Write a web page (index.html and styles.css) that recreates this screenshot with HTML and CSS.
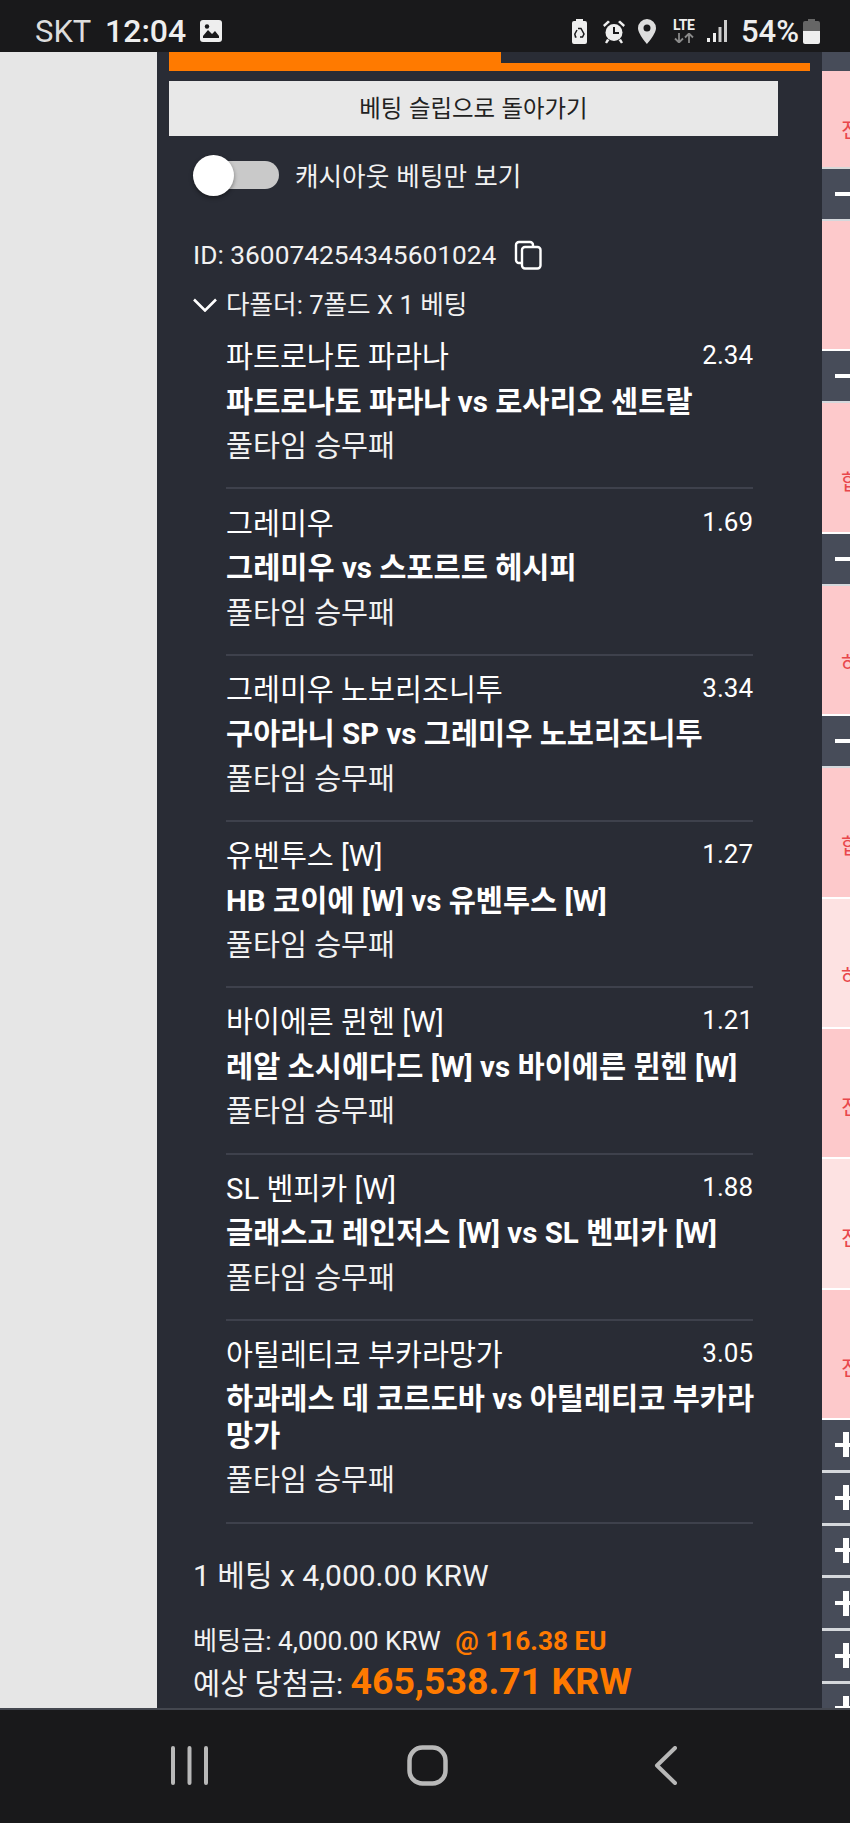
FILE: index.html
```html
<!DOCTYPE html>
<html lang="ko">
<head>
    <meta charset="UTF-8">
    <meta name="viewport" content="width=device-width, initial-scale=1.0">
    <title>베팅 내역</title>
    <link rel="stylesheet" href="styles.css">
</head>
<body>
    <div class="statusbar">
        <div class="status-left">
            <span class="carrier">SKT</span>
            <span class="clock">12:04</span>
            <svg class="ic-gallery" viewBox="0 0 22 22"><path fill="#eee" d="M3 0h16a3 3 0 0 1 3 3v16a3 3 0 0 1-3 3H3a3 3 0 0 1-3-3V3a3 3 0 0 1 3-3z"/><path fill="#19191b" d="M3 16l5-6 4 4 3-3 4 5v2H3z"/><circle cx="7" cy="6.500" r="2.200" fill="#19191b"/></svg>
        </div>
        <div class="status-right">
            <svg class="ic-recycle" viewBox="0 0 15 25"><path fill="#eee" d="M4 0h7v2h2a2 2 0 0 1 2 2v19a2 2 0 0 1-2 2H2a2 2 0 0 1-2-2V4a2 2 0 0 1 2-2h2z"/><path fill="none" stroke="#19191b" stroke-width="1.500" d="M6 9.500h3l3 5.500-1.500 3H8M4.500 18H3.500L2.800 15 5 11"/></svg>
            <svg class="ic-alarm" viewBox="0 0 24 25"><circle cx="12" cy="13.500" r="8.500" fill="#eee"/><path fill="#eee" d="M1 6l5-4.500 2 1.500-5.500 5zM23 6l-5-4.500-2 1.500 5.500 5zM5 20l-2 3.500 2 1 2.500-3.500zM19 20l2 3.500-2 1-2.500-3.500z"/><path fill="none" stroke="#19191b" stroke-width="2" d="M12 8v6h5"/></svg>
            <svg class="ic-pin" viewBox="0 0 18 25"><path fill="#ddd" fill-rule="evenodd" d="M9 0a9 9 0 0 1 9 9c0 6-9 16-9 16S0 15 0 9a9 9 0 0 1 9-9zm0 5.500a3.500 3.500 0 1 0 0 7 3.500 3.500 0 0 0 0-7z"/></svg>
            <div class="lte">
                <span>LTE</span>
                <svg viewBox="0 0 22 10"><path fill="none" stroke="#8a8a8a" stroke-width="1.800" d="M6 0v9M2 5.500L6 9.500l4-4M16 10V1M12 4.500L16 .5l4 4"/></svg>
            </div>
            <svg class="ic-signal" viewBox="0 0 20 24"><path fill="#eee" d="M0 19h3v4H0zM6 14h3v9H6z"/><path fill="#ccc" d="M11.500 8h3v15h-3zM17 1h3v22h-3z"/></svg>
            <span class="battery-text">54%</span>
            <svg class="ic-battery" viewBox="0 0 17 25"><path fill="#666" d="M5 0h7v2h3a2 2 0 0 1 2 2v9H0V4a2 2 0 0 1 2-2h3z"/><path fill="#eee" d="M0 12h17v11a2 2 0 0 1-2 2H2a2 2 0 0 1-2-2z"/></svg>
        </div>
    </div>

    <div class="main">
        <div class="side-blank"></div>

        <div class="panel">
            <div class="bar-short"></div>
            <div class="bar-long"></div>
            <button class="back-btn">베팅 슬립으로 돌아가기</button>

            <div class="cashout">
                <div class="switch"><span class="knob"></span></div>
                <span class="cashout-label">캐시아웃 베팅만 보기</span>
            </div>

            <div class="bet-id">
                <span>ID: 360074254345601024</span>
                <svg viewBox="0 0 28 30" class="ic-copy"><rect x="8" y="7" width="18.500" height="21.500" rx="3" fill="none" stroke="#fff" stroke-width="2.400"/><path fill="none" stroke="#fff" stroke-width="2.400" d="M8 23H5a3 3 0 0 1-3-3V5a3 3 0 0 1 3-3h11a3 3 0 0 1 3 3v2"/></svg>
            </div>

            <div class="multi">
                <svg viewBox="0 0 24 14" class="ic-chevron"><path fill="none" stroke="#fff" stroke-width="2.600" d="M1 1.500l11 11 11-11"/></svg>
                <span>다폴더: 7폴드 X 1 베팅</span>
            </div>

            <div class="legs">
                <div class="leg">
                    <div class="leg-top"><span>파트로나토 파라나</span><span class="odds">2.34</span></div>
                    <div class="leg-match">파트로나토 파라나 vs 로사리오 센트랄</div>
                    <div class="leg-market">풀타임 승무패</div>
                </div>
                <div class="leg">
                    <div class="leg-top"><span>그레미우</span><span class="odds">1.69</span></div>
                    <div class="leg-match">그레미우 vs 스포르트 헤시피</div>
                    <div class="leg-market">풀타임 승무패</div>
                </div>
                <div class="leg">
                    <div class="leg-top"><span>그레미우 노보리조니투</span><span class="odds">3.34</span></div>
                    <div class="leg-match">구아라니 SP vs 그레미우 노보리조니투</div>
                    <div class="leg-market">풀타임 승무패</div>
                </div>
                <div class="leg">
                    <div class="leg-top"><span>유벤투스 [W]</span><span class="odds">1.27</span></div>
                    <div class="leg-match">HB 코이에 [W] vs 유벤투스 [W]</div>
                    <div class="leg-market">풀타임 승무패</div>
                </div>
                <div class="leg">
                    <div class="leg-top"><span>바이에른 뮌헨 [W]</span><span class="odds">1.21</span></div>
                    <div class="leg-match">레알 소시에다드 [W] vs 바이에른 뮌헨 [W]</div>
                    <div class="leg-market">풀타임 승무패</div>
                </div>
                <div class="leg">
                    <div class="leg-top"><span>SL 벤피카 [W]</span><span class="odds">1.88</span></div>
                    <div class="leg-match">글래스고 레인저스 [W] vs SL 벤피카 [W]</div>
                    <div class="leg-market">풀타임 승무패</div>
                </div>
                <div class="leg">
                    <div class="leg-top"><span>아틸레티코 부카라망가</span><span class="odds">3.05</span></div>
                    <div class="leg-match">하과레스 데 코르도바 vs 아틸레티코 부카라망가</div>
                    <div class="leg-market">풀타임 승무패</div>
                </div>
            </div>

            <div class="stake-line">1 베팅 x 4,000.00 KRW</div>
            <div class="stake">베팅금: 4,000.00 KRW <span class="stake-odds">@ 116.38 EU</span></div>
            <div class="payout">예상 당첨금: <span class="payout-value">465,538.71 KRW</span></div>
        </div>

        <div class="market-col">
            <div class="exp-top"></div>
            <div class="cell first">진</div>
            <div class="exp minus"></div>
            <div class="cell"></div>
            <div class="exp minus"></div>
            <div class="cell">합</div>
            <div class="exp minus"></div>
            <div class="cell">하</div>
            <div class="exp minus"></div>
            <div class="cell">합</div>
            <div class="cell light">하</div>
            <div class="cell">진</div>
            <div class="cell light">진</div>
            <div class="cell">진</div>
            <div class="exp plus"></div>
            <div class="exp plus"></div>
            <div class="exp plus"></div>
            <div class="exp plus"></div>
            <div class="exp plus"></div>
            <div class="exp plus"></div>
        </div>
    </div>

    <div class="navbar">
        <svg class="nav-recent" viewBox="0 0 37 39"><path stroke="#b8b8b8" stroke-width="4" stroke-linecap="round" d="M2 2v35M18.500 2v35M35 2v35"/></svg>
        <svg class="nav-home" viewBox="0 0 41 41"><rect x="2.500" y="2.500" width="36" height="36" rx="13" fill="none" stroke="#b8b8b8" stroke-width="4.500"/></svg>
        <svg class="nav-back" viewBox="0 0 23 39"><path fill="none" stroke="#b8b8b8" stroke-width="4" stroke-linecap="round" stroke-linejoin="round" d="M21 2L3 19.500 21 37"/></svg>
    </div>
</body>
</html>
```

FILE: styles.css
```css
* { box-sizing: border-box; margin: 0; padding: 0; }
body { width: 850px; height: 1823px; overflow: hidden; display: flex; flex-direction: column; background: #19191b; color: #fff; font-family: Roboto, "Noto Sans CJK KR", sans-serif; }

.statusbar {
    height: 52px;
    display: flex;
    justify-content: space-between;
    align-items: center;
    padding: 12px 30px 2px 35px;
    background: #19191b;
    color: #eee;
}
.status-left, .status-right { display: flex; align-items: center; }
.carrier { font-size: 31px; width: 70px; color: #ddd; }
.clock { font-size: 32px; font-weight: 500; width: 95px; }
.ic-gallery { width: 22px; height: 22px; }
.ic-recycle { width: 15px; height: 25px; margin-right: 15px; }
.ic-alarm { width: 24px; height: 25px; margin-right: 12px; }
.ic-pin { width: 18px; height: 25px; margin-right: 17px; }
.lte { width: 23px; margin-right: 11px; display: flex; flex-direction: column; font-size: 14px; font-weight: 700; line-height: 13px; letter-spacing: -0.3px; }
.lte svg { width: 22px; height: 10px; margin-top: 1px; }
.ic-signal { width: 20px; height: 24px; margin-right: 14px; }
.battery-text { font-size: 31px; font-weight: 500; width: 62px; }
.ic-battery { width: 17px; height: 25px; }

.main { height: 1658px; display: flex; overflow: hidden; border-bottom: 2px solid #44474f; }
.side-blank { width: 157px; background: #e6e6e6; }

.panel { width: 665px; padding: 0 12px; background: #292c35; }
.bar-short { width: 332px; height: 11px; background: #ff7a00; }
.bar-long { width: 641px; height: 8px; background: #ff7a00; }
.back-btn {
    display: block;
    width: 609px;
    height: 55px;
    margin-top: 10px;
    padding-bottom: 4px;
    border: none;
    background: #e8e8e8;
    color: #222;
    font-family: "Noto Sans CJK KR", sans-serif;
    font-size: 23.4px;
}

.cashout { display: flex; align-items: center; height: 41px; margin-top: 18px; padding-left: 24px; }
.switch { position: relative; width: 86px; height: 28px; margin-right: 16px; padding-left: 20px; }
.switch::before { content: ""; display: block; height: 28px; border-radius: 14px; background: #c9c9c9; }
.knob { position: absolute; left: 0; top: -6px; width: 41px; height: 41px; border-radius: 50%; background: #fff; box-shadow: 0 2px 4px rgba(0,0,0,0.4); }
.cashout-label { font-size: 25.6px; font-family: "Noto Sans CJK KR", sans-serif; color: #f2f2f2; }

.bet-id { display: flex; align-items: center; height: 36px; margin-top: 42px; padding-left: 24px; font-size: 26.3px; color: #f2f2f2; }
.ic-copy { width: 28px; height: 30px; margin-left: 18px; }

.multi { display: flex; align-items: center; height: 36px; margin-top: 11px; padding-left: 24px; font-size: 25.6px; color: #f2f2f2; }
.ic-chevron { width: 24px; height: 14px; margin-right: 9px; margin-top: 6px; }

.legs { padding: 19.3px 0 0 57px; width: 584px; }
.leg { padding-bottom: 22.7px; margin-bottom: 16.1px; border-bottom: 2.5px solid #3e414c; font-size: 29.3px; line-height: 36.500px; }
.leg-top { display: flex; justify-content: space-between; height: 36.500px; }
.odds { font-size: 26px; line-height: 33px; }
.leg-match { font-size: 29.5px; font-weight: 700; margin-top: 8px; margin-right: -4px; }
.leg-market { margin-top: 8px; color: #f2f2f2; }

.stake-line { margin-top: 32px; padding-left: 24px; font-size: 30px; line-height: 40px; color: #f2f2f2; }
.stake { margin-top: 27px; padding-left: 24px; font-size: 26.2px; line-height: 36px; color: #f2f2f2; }
.stake-odds { margin-left: 8px; color: #ff7a00; font-weight: 700; }
.payout { padding-left: 24px; font-size: 29.5px; line-height: 44px; color: #f2f2f2; }
.payout-value { color: #ff7a00; font-weight: 700; font-size: 37.4px; }

.market-col { width: 28px; display: flex; flex-direction: column; background: #474c59; }
.exp-top { height: 19px; flex: none; }
.cell { flex: none; height: 130.4px; padding: 24px 0 0 19px; display: flex; align-items: center; overflow: hidden; white-space: nowrap; border-bottom: 2px solid #fff; background: #fdc9cb; color: #e8474c; font-family: "Noto Sans CJK KR", sans-serif; font-size: 21px; }
.cell.first { height: 98px; padding-top: 18px; border-bottom-color: #d8d8d8; }
.cell.light { background: #fde2e2; }
.exp { flex: none; height: 52px; border-bottom: 2px solid #d5d8dc; }
.exp.minus { background: linear-gradient(#fff, #fff) 13px 50% / 15px 4px no-repeat, #474c59; }
.exp.plus { height: 52.700px; border-bottom-width: 3px; background: linear-gradient(#fff, #fff) 13px 50% / 15px 4px no-repeat, linear-gradient(#fff, #fff) 21px 50% / 6px 25px no-repeat, #474c59; }

.navbar { flex: 1; position: relative; display: flex; align-items: center; padding-bottom: 3px; background: #19191b; }
.nav-recent { width: 37px; height: 39px; margin-left: 171px; }
.nav-home { width: 41px; height: 41px; margin-left: 199px; }
.nav-back { width: 23px; height: 39px; margin-left: 206px; }
```
